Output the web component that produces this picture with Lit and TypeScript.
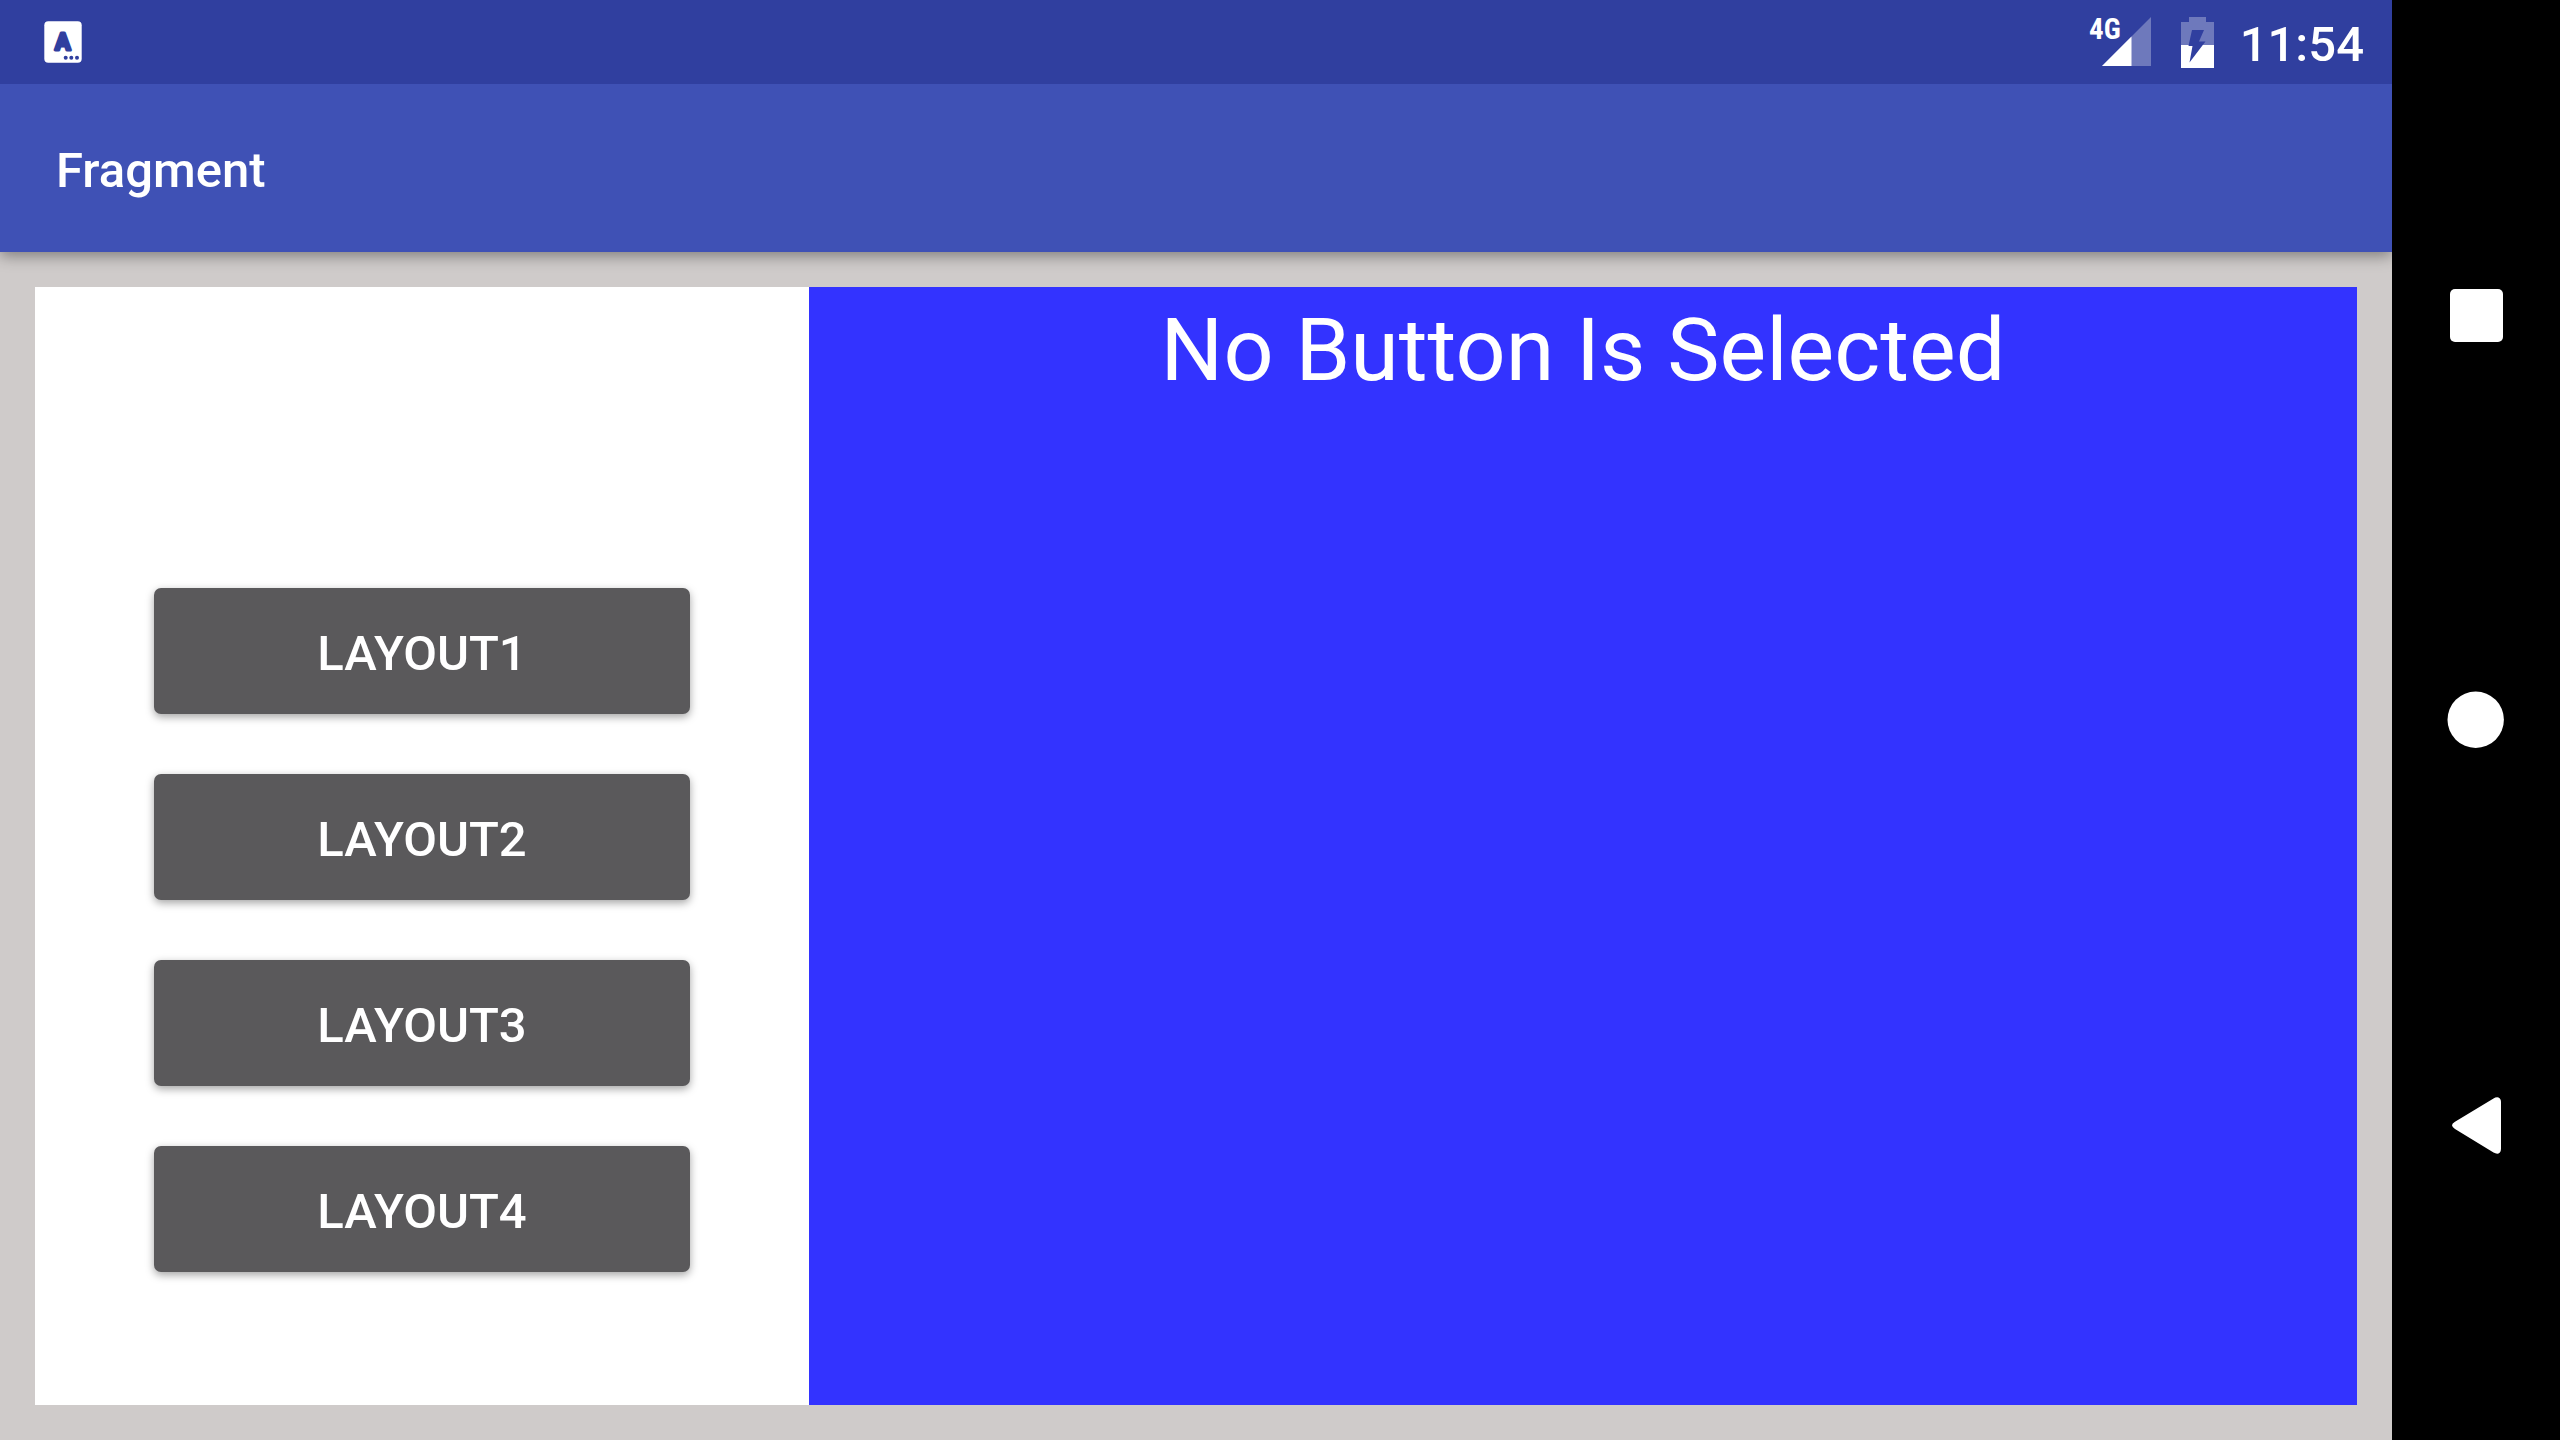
import { LitElement, html, css, svg } from "lit";
import { customElement } from "lit/decorators.js";

const LAYOUTS = ["LAYOUT1", "LAYOUT2", "LAYOUT3", "LAYOUT4"];

const navIcons = [
  { label: "Overview", shape: svg`<rect x="26" y="26" width="53" height="53" rx="5" />` },
  { label: "Home", shape: svg`<circle cx="51.7" cy="51.7" r="28.2" />` },
  {
    label: "Back",
    shape: svg`<path d="M31 48.7 L69.5 25.4 Q72 23.8 74.5 24.4 Q77 25.4 77 29 V75.5 Q77 79.5 74.5 80.5 Q72 81 69.5 79.5 L31 56 Q28 54 28 52.3 Q28 50.5 31 48.7 Z" />`,
  },
];

@customElement("status-bar")
class StatusBar extends LitElement {
  static styles = css`
    :host {
      display: flex;
      align-items: center;
      justify-content: space-between;
      height: 84px;
      padding: 0 28px 0 44px;
      background: #303f9f;
      color: #fff;
    }
    svg {
      display: block;
      overflow: visible;
    }
    .letter {
      font: 700 23px Roboto, sans-serif;
      fill: #303f9f;
      stroke: #303f9f;
      stroke-width: 3px;
      stroke-linejoin: round;
    }
    .tray {
      display: flex;
      align-items: center;
    }
    .network {
      font: 700 29px "Roboto Condensed", "Liberation Sans Narrow", Roboto, sans-serif;
      fill: #fff;
    }
    .battery {
      margin: 0 26px 0 30px;
    }
    .clock {
      font-size: 49px;
      font-weight: 500;
      line-height: 56px;
      padding-top: 5px;
    }
  `;

  render() {
    return html`
      <svg width="38" height="42" viewBox="0 0 38 42" aria-hidden="true">
        <rect x="0.3" y="0.3" width="37.4" height="41.4" rx="4" fill="#fff" />
        <text class="letter" x="18.8" y="29" text-anchor="middle">A</text>
        <g fill="#303f9f">
          <circle cx="21.7" cy="36.8" r="2" />
          <circle cx="27.3" cy="36.8" r="2" />
          <circle cx="33" cy="36.8" r="2" />
        </g>
      </svg>
      <div class="tray">
        <svg width="62" height="50" viewBox="0 0 62 50">
          <path d="M62 0 V49 H13 Z" fill="#fff" opacity="0.3" />
          <path d="M42.5 19.5 V49 H13 Z" fill="#fff" />
          <text class="network" x="0" y="22">4G</text>
        </svg>
        <svg class="battery" width="33" height="51" viewBox="0 0 33 51" aria-hidden="true">
          <path
            d="M8 0 H25 V5 H33 V28 H21.8 L24.5 24.5 H18 L23 13 H11 L7.7 28 H0 V5 H8 Z"
            fill="#fff"
            opacity="0.3"
          />
          <path d="M0 28 H7.7 L7.5 29 H11.5 L8.5 45.5 L21.8 28 H33 V51 H0 Z" fill="#fff" />
        </svg>
        <span class="clock">11:54</span>
      </div>
    `;
  }
}

@customElement("nav-bar")
class NavBar extends LitElement {
  static styles = css`
    :host {
      display: flex;
      flex-direction: column;
      align-items: stretch;
      justify-content: center;
      gap: 125px;
      background: #000;
    }
    .key {
      display: flex;
      align-items: center;
      justify-content: center;
      height: 280px;
      padding: 0;
      border: 0;
      background: none;
      cursor: pointer;
    }
    svg {
      display: block;
      fill: #fff;
    }
  `;

  render() {
    return navIcons.map(
      (icon) => html`
        <button class="key" aria-label=${icon.label}>
          <svg width="104" height="104" viewBox="0 0 104 104">${icon.shape}</svg>
        </button>
      `
    );
  }
}

@customElement("app-root")
class AppRoot extends LitElement {
  static styles = css`
    :host {
      display: grid;
      grid-template-columns: 1fr 168px;
      min-height: 100vh;
      font-family: Roboto, sans-serif;
      color: #fff;
    }
    .screen {
      display: flex;
      flex-direction: column;
      overflow: hidden;
      background: #cfcbca;
    }
    status-bar {
      z-index: 1;
    }
    .app-bar {
      display: flex;
      align-items: center;
      height: 168px;
      padding: 0 56px;
      box-sizing: border-box;
      background: #3f51b5;
      box-shadow: 0 4px 14px rgba(0, 0, 0, 0.38);
    }
    .title {
      margin: 0;
      padding-top: 5px;
      font-size: 49px;
      font-weight: 500;
      line-height: 56px;
    }
    .content {
      flex: 1;
      display: grid;
      grid-template-columns: 1fr 2fr;
      padding: 35px;
    }
    .menu {
      display: flex;
      flex-direction: column;
      gap: 60px;
      padding: 301px 119px 0;
      background: #fff;
    }
    .choice {
      height: 126px;
      padding: 5px 0 0;
      border: 0;
      border-radius: 7px;
      background: #5a595b;
      color: #fff;
      font: 500 49px/56px Roboto, sans-serif;
      box-shadow: 0 3px 8px rgba(0, 0, 0, 0.36);
      cursor: pointer;
    }
    .detail {
      padding-top: 9px;
      background: #3333ff;
      text-align: center;
    }
    .message {
      margin: 0;
      font-size: 88px;
      font-weight: 400;
      line-height: 108px;
    }
  `;

  render() {
    return html`
      <div class="screen">
        <status-bar></status-bar>
        <header class="app-bar"><h1 class="title">Fragment</h1></header>
        <main class="content">
          <section class="menu">
            ${LAYOUTS.map((name) => html`<button class="choice">${name}</button>`)}
          </section>
          <section class="detail"><p class="message">No Button Is Selected</p></section>
        </main>
      </div>
      <nav-bar></nav-bar>
    `;
  }
}
